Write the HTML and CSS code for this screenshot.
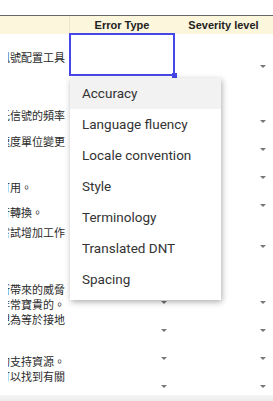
FILE: index.html
```html
<!DOCTYPE html>
<html>
<head>
  <meta charset="utf-8" />
  <title>Review sheet</title>
  <link rel="stylesheet" href="styles.css">
</head>
<body>
  <div class="topbar"></div>

  <div class="sheet">
    <!-- header row -->
    <div class="hcell"></div>
    <div class="hcell">Error Type</div>
    <div class="hcell">Severity level</div>

    <!-- source text column, cut off at the left edge -->
    <div class="notes">
      <div class="clip">
        <p class="g1">訊號配置工具</p>
        <p class="g2">低信號的頻率</p>
        <p class="g3">速度單位變更</p>
        <p class="g4">可用。</p>
        <p class="g5">行轉換。</p>
        <p class="g6">嘗試增加工作</p>
        <p class="g7">所帶來的威脅<br>非常寶貴的。<br>視為等於接地</p>
        <p class="g8">的支持資源。<br>可以找到有關</p>
      </div>
    </div>

    <!-- row 1 : selected cell with open menu -->
    <div class="cell selected">
      <ul class="menu">
        <li class="hover">Accuracy</li>
        <li>Language fluency</li>
        <li>Locale convention</li>
        <li>Style</li>
        <li>Terminology</li>
        <li>Translated DNT</li>
        <li>Spacing</li>
      </ul>
    </div>
    <div class="cell"><span class="arrow"></span></div>

    <div class="cell"></div><div class="cell"><span class="arrow"></span></div>
    <div class="cell"></div><div class="cell"><span class="arrow"></span></div>
    <div class="cell"></div><div class="cell"><span class="arrow"></span></div>
    <div class="cell"></div><div class="cell"><span class="arrow"></span></div>
    <div class="cell"></div><div class="cell"><span class="arrow"></span></div>
    <div class="cell"><span class="arrow"></span></div><div class="cell"><span class="arrow"></span></div>
    <div class="cell"><span class="arrow"></span></div><div class="cell"><span class="arrow"></span></div>
    <div class="cell"><span class="arrow"></span></div><div class="cell"><span class="arrow"></span></div>
    <div class="cell"><span class="arrow"></span></div><div class="cell"><span class="arrow"></span></div>
  </div>

  <div class="scrollbar"></div>
</body>
</html>
```

FILE: styles.css
```css
html, body {
  margin: 0;
  padding: 0;
  background: #ffffff;
  overflow: hidden;
}

body {
  width: 273px;
  height: 401px;
  font-family: "Liberation Sans", Arial, sans-serif;
  color: #222;
}

.topbar {
  height: 15px;
  border-bottom: 1px solid #666;
}

.sheet {
  display: grid;
  grid-template-columns: 70px 104px 99px;
  grid-template-rows: 18px 41px 55px 28px 28px 28px 41px 56px 28px 28px 28px;
}

.hcell {
  background: #fbf6dc;
  font-size: 11px;
  font-weight: bold;
  display: flex;
  align-items: center;
  justify-content: center;
}

.hcell:first-child {
  border-right: 1px solid #ece6c6;
}

.notes {
  grid-column: 1;
  grid-row: 2 / -1;
}

.notes .clip {
  margin-left: 8px;
  overflow: hidden;
}

.notes p {
  margin: 0 0 0 -9px;
  white-space: nowrap;
  font-family: "Noto Sans CJK TC", "Noto Sans CJK SC", sans-serif;
  font-size: 11px;
  line-height: 15px;
  color: #2a2a2a;
}

.notes .g1 { margin-top: 16px; }
.notes .g2 { margin-top: 43px; }
.notes .g3 { margin-top: 11px; }
.notes .g4 { margin-top: 31px; }
.notes .g5 { margin-top: 10px; }
.notes .g6 { margin-top: 5px; }
.notes .g7 { margin-top: 42px; }
.notes .g8 { margin-top: 27px; }

.cell {
  display: flex;
  align-items: flex-end;
  justify-content: flex-end;
  padding: 0 7px 7px 0;
  position: relative;
}

.arrow {
  width: 0;
  height: 0;
  border-left: 3.5px solid transparent;
  border-right: 3.5px solid transparent;
  border-top: 3.5px solid #777;
}

.selected {
  outline: 2px solid #4747e8;
  outline-offset: -1px;
  z-index: 2;
}

.selected::after {
  content: "";
  position: absolute;
  right: -3px;
  bottom: -3px;
  width: 5px;
  height: 5px;
  background: #4747e8;
}

.menu {
  position: absolute;
  top: 44px;
  left: 0;
  width: 151px;
  margin: 0;
  padding: 0 0 5px;
  list-style: none;
  background: #fff;
  box-shadow: 1px 2px 6px rgba(0,0,0,0.32);
  font-family: Roboto, "Noto Sans", sans-serif;
  font-size: 13.5px;
  color: #333;
  z-index: 3;
}

.menu li {
  height: 31px;
  line-height: 31px;
  padding-left: 12px;
}

.menu li.hover {
  background: #f2f2f2;
}

.scrollbar {
  height: 6px;
  background: linear-gradient(#f6f6f6, #ececec);
}
```
